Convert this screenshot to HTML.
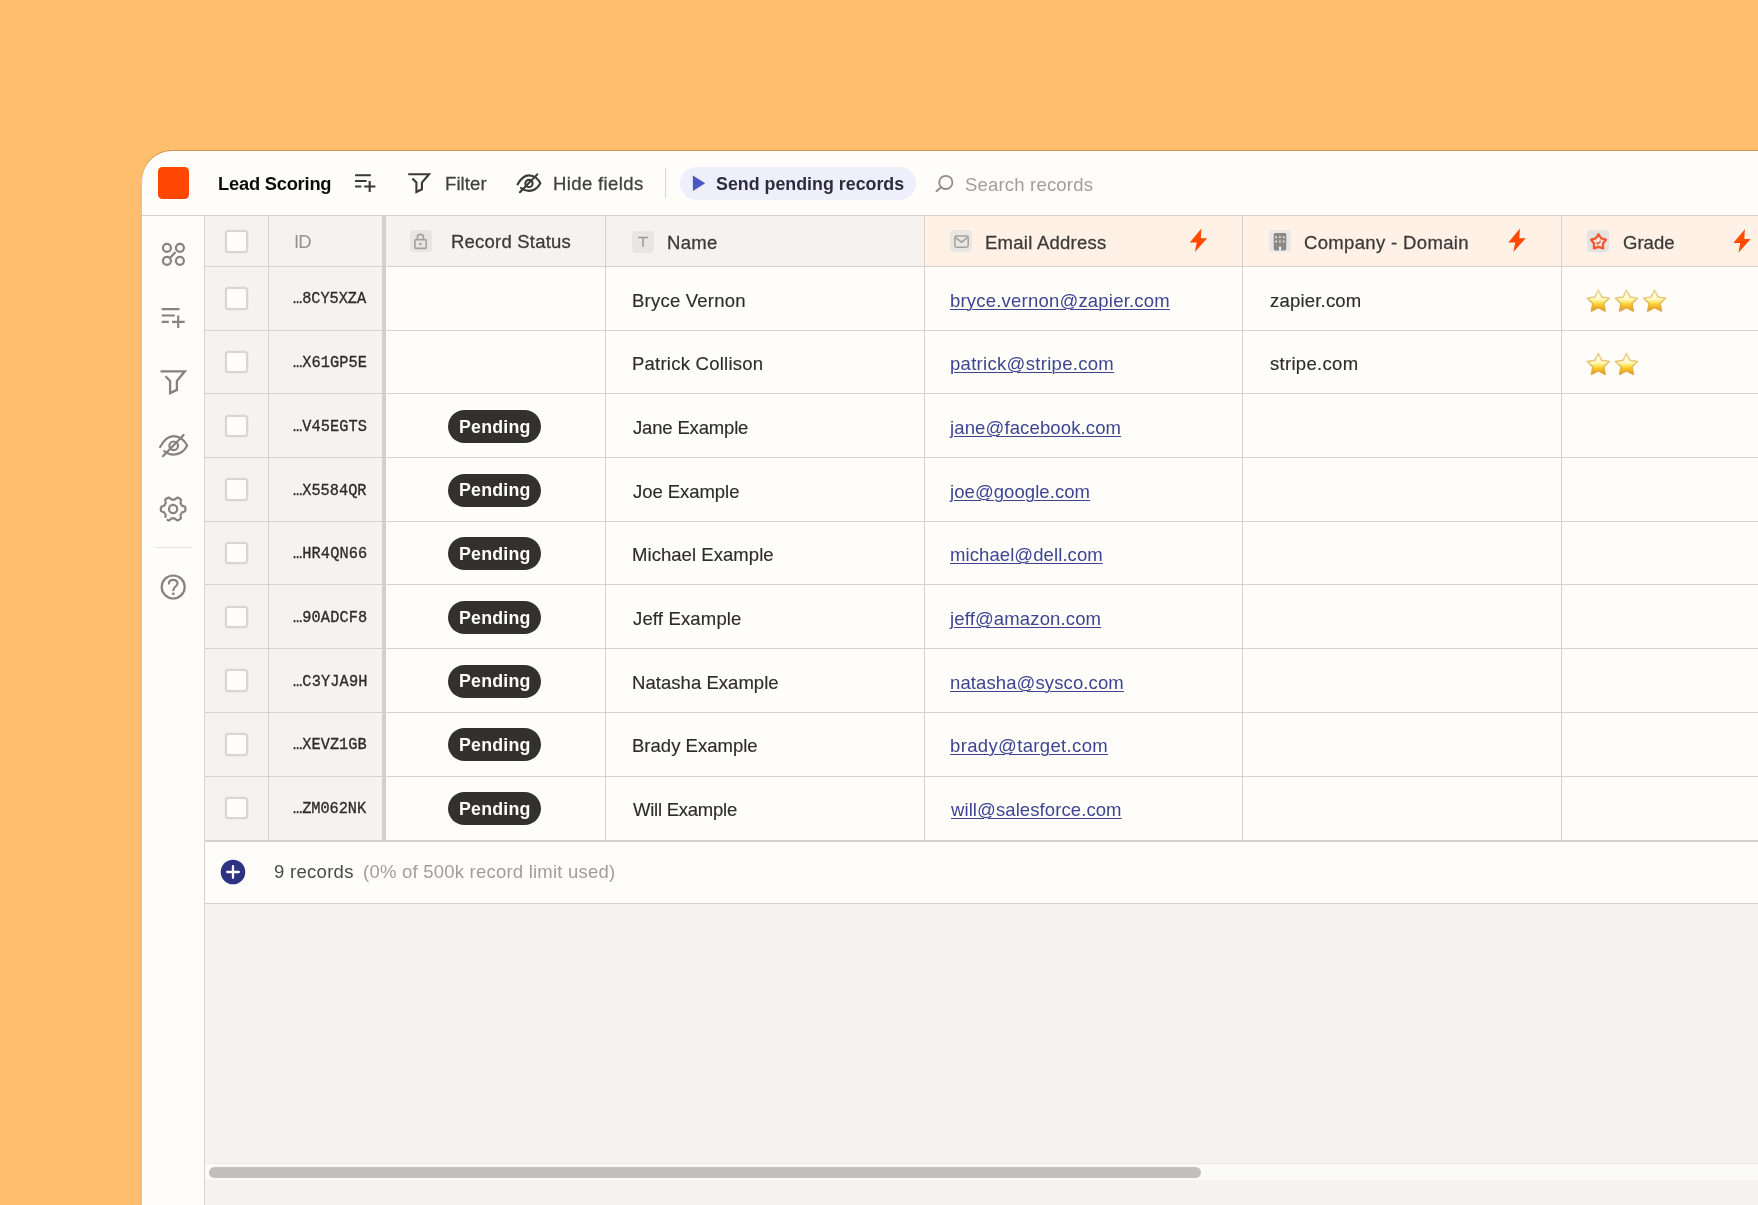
<!DOCTYPE html>
<html><head><meta charset="utf-8"><title>Lead Scoring</title>
<style>
html,body{margin:0;padding:0;width:1758px;height:1205px;overflow:hidden}
#root{width:1758px;height:1205px;overflow:hidden;background:#FFBD6E;position:relative;font-family:"Liberation Sans",sans-serif}
.t{position:absolute;white-space:nowrap;will-change:transform}
.r{position:absolute}
svg{position:absolute;overflow:visible}
</style></head><body><div id="root">
<div class="r" style="left:142.00px;top:150.50px;width:1700.00px;height:1100.00px;background:#FFFDF9;border-top-left-radius:30px;box-shadow:0 -1px 0 rgba(140,95,50,.45)"></div>
<div class="r" style="left:142.00px;top:215.00px;width:1620.00px;height:1.00px;background:#D5D2CF;"></div>
<div class="r" style="left:204.00px;top:216.00px;width:1.00px;height:1000.00px;background:#D5D2CF;"></div>
<div class="r" style="left:205.00px;top:904.00px;width:1560.00px;height:310.00px;background:#F5F2EF;"></div>
<div class="r" style="left:205.00px;top:216.00px;width:400.50px;height:50.50px;background:#F5F2EF;"></div>
<div class="r" style="left:605.50px;top:216.00px;width:318.50px;height:50.50px;background:#F5F2EF;"></div>
<div class="r" style="left:924.00px;top:216.00px;width:900.00px;height:50.50px;background:#FFF1E6;"></div>
<div class="r" style="left:205.00px;top:266.50px;width:180.00px;height:573.76px;background:#F5F2EF;"></div>
<div class="r" style="left:205.00px;top:265.96px;width:1560.00px;height:1.00px;background:#D5D2CF;"></div>
<div class="r" style="left:205.00px;top:329.66px;width:1560.00px;height:1.00px;background:#D5D2CF;"></div>
<div class="r" style="left:205.00px;top:393.36px;width:1560.00px;height:1.00px;background:#D5D2CF;"></div>
<div class="r" style="left:205.00px;top:457.06px;width:1560.00px;height:1.00px;background:#D5D2CF;"></div>
<div class="r" style="left:205.00px;top:520.76px;width:1560.00px;height:1.00px;background:#D5D2CF;"></div>
<div class="r" style="left:205.00px;top:584.46px;width:1560.00px;height:1.00px;background:#D5D2CF;"></div>
<div class="r" style="left:205.00px;top:648.16px;width:1560.00px;height:1.00px;background:#D5D2CF;"></div>
<div class="r" style="left:205.00px;top:711.86px;width:1560.00px;height:1.00px;background:#D5D2CF;"></div>
<div class="r" style="left:205.00px;top:775.56px;width:1560.00px;height:1.00px;background:#D5D2CF;"></div>
<div class="r" style="left:205.00px;top:840.20px;width:1560.00px;height:1.50px;background:#D5D2CF;"></div>
<div class="r" style="left:205.00px;top:903.00px;width:1560.00px;height:1.00px;background:#D5D2CF;"></div>
<div class="r" style="left:267.50px;top:216.00px;width:1.00px;height:625.00px;background:#D5D2CF;"></div>
<div class="r" style="left:605.00px;top:216.00px;width:1.00px;height:625.00px;background:#D5D2CF;"></div>
<div class="r" style="left:923.50px;top:216.00px;width:1.00px;height:625.00px;background:#D5D2CF;"></div>
<div class="r" style="left:1242.00px;top:216.00px;width:1.00px;height:625.00px;background:#D5D2CF;"></div>
<div class="r" style="left:1560.50px;top:216.00px;width:1.00px;height:625.00px;background:#D5D2CF;"></div>
<div class="r" style="left:382.00px;top:216.00px;width:3.70px;height:625.00px;background:#D2CFCC;"></div>
<div class="r" style="left:225.20px;top:230.30px;width:18.40px;height:18.40px;background:#FFFDF9;border:2px solid #D8D5D2;border-radius:3.5px;box-shadow:0 0 1.5px rgba(0,0,0,.12)"></div>
<div class="r" style="left:225.20px;top:287.26px;width:18.40px;height:18.40px;background:#FFFDF9;border:2px solid #D8D5D2;border-radius:3.5px;box-shadow:0 0 1.5px rgba(0,0,0,.12)"></div>
<div class="r" style="left:225.20px;top:350.96px;width:18.40px;height:18.40px;background:#FFFDF9;border:2px solid #D8D5D2;border-radius:3.5px;box-shadow:0 0 1.5px rgba(0,0,0,.12)"></div>
<div class="r" style="left:225.20px;top:414.66px;width:18.40px;height:18.40px;background:#FFFDF9;border:2px solid #D8D5D2;border-radius:3.5px;box-shadow:0 0 1.5px rgba(0,0,0,.12)"></div>
<div class="r" style="left:225.20px;top:478.36px;width:18.40px;height:18.40px;background:#FFFDF9;border:2px solid #D8D5D2;border-radius:3.5px;box-shadow:0 0 1.5px rgba(0,0,0,.12)"></div>
<div class="r" style="left:225.20px;top:542.06px;width:18.40px;height:18.40px;background:#FFFDF9;border:2px solid #D8D5D2;border-radius:3.5px;box-shadow:0 0 1.5px rgba(0,0,0,.12)"></div>
<div class="r" style="left:225.20px;top:605.76px;width:18.40px;height:18.40px;background:#FFFDF9;border:2px solid #D8D5D2;border-radius:3.5px;box-shadow:0 0 1.5px rgba(0,0,0,.12)"></div>
<div class="r" style="left:225.20px;top:669.46px;width:18.40px;height:18.40px;background:#FFFDF9;border:2px solid #D8D5D2;border-radius:3.5px;box-shadow:0 0 1.5px rgba(0,0,0,.12)"></div>
<div class="r" style="left:225.20px;top:733.16px;width:18.40px;height:18.40px;background:#FFFDF9;border:2px solid #D8D5D2;border-radius:3.5px;box-shadow:0 0 1.5px rgba(0,0,0,.12)"></div>
<div class="r" style="left:225.20px;top:796.86px;width:18.40px;height:18.40px;background:#FFFDF9;border:2px solid #D8D5D2;border-radius:3.5px;box-shadow:0 0 1.5px rgba(0,0,0,.12)"></div>
<div class="t" style="left:293.69px;top:229.50px;font:400 18.5px/24px 'Liberation Sans',sans-serif;letter-spacing:-0.907px;color:#96938f;">ID</div>
<div class="t" style="left:450.88px;top:229.50px;font:400 18.5px/24px 'Liberation Sans',sans-serif;letter-spacing:0.213px;color:#3b3a38;-webkit-text-stroke:0.28px #3b3a38">Record Status</div>
<div class="t" style="left:667.08px;top:230.50px;font:400 18.5px/24px 'Liberation Sans',sans-serif;letter-spacing:0.297px;color:#3b3a38;-webkit-text-stroke:0.28px #3b3a38">Name</div>
<div class="t" style="left:985.38px;top:230.50px;font:400 18.5px/24px 'Liberation Sans',sans-serif;letter-spacing:0.253px;color:#3b3a38;-webkit-text-stroke:0.28px #3b3a38">Email Address</div>
<div class="t" style="left:1303.66px;top:230.50px;font:400 18.5px/24px 'Liberation Sans',sans-serif;letter-spacing:0.345px;color:#3b3a38;-webkit-text-stroke:0.28px #3b3a38">Company - Domain</div>
<div class="t" style="left:1623.27px;top:230.50px;font:400 18.5px/24px 'Liberation Sans',sans-serif;letter-spacing:0.033px;color:#3b3a38;-webkit-text-stroke:0.28px #3b3a38">Grade</div>
<div class="t" style="left:293.13px;top:287.46px;font:400 15.3px/24px 'Liberation Mono',monospace;letter-spacing:-0.038px;color:#2d2c2b;transform:scaleY(1.13);transform-origin:0 17.2px;-webkit-text-stroke:0.3px #2d2c2b">…8CY5XZA</div>
<div class="t" style="left:631.88px;top:288.50px;font:400 18.5px/24px 'Liberation Sans',sans-serif;letter-spacing:0.223px;color:#2d2c2b;-webkit-text-stroke:0.15px #2d2c2b">Bryce Vernon</div>
<div class="t" style="left:950.21px;top:288.50px;font:400 18.5px/24px 'Liberation Sans',sans-serif;letter-spacing:0.206px;color:#3d4592;text-decoration:underline;text-decoration-thickness:1.2px;text-underline-offset:1.6px">bryce.vernon@zapier.com</div>
<div class="t" style="left:1269.65px;top:288.50px;font:400 18.5px/24px 'Liberation Sans',sans-serif;letter-spacing:0.201px;color:#2d2c2b;-webkit-text-stroke:0.15px #2d2c2b">zapier.com</div>
<div class="t" style="left:293.13px;top:351.16px;font:400 15.3px/24px 'Liberation Mono',monospace;letter-spacing:0.075px;color:#2d2c2b;transform:scaleY(1.13);transform-origin:0 17.2px;-webkit-text-stroke:0.3px #2d2c2b">…X61GP5E</div>
<div class="t" style="left:631.88px;top:351.50px;font:400 18.5px/24px 'Liberation Sans',sans-serif;letter-spacing:0.236px;color:#2d2c2b;-webkit-text-stroke:0.15px #2d2c2b">Patrick Collison</div>
<div class="t" style="left:950.21px;top:351.50px;font:400 18.5px/24px 'Liberation Sans',sans-serif;letter-spacing:0.301px;color:#3d4592;text-decoration:underline;text-decoration-thickness:1.2px;text-underline-offset:1.6px">patrick@stripe.com</div>
<div class="t" style="left:1269.89px;top:351.50px;font:400 18.5px/24px 'Liberation Sans',sans-serif;letter-spacing:0.301px;color:#2d2c2b;-webkit-text-stroke:0.15px #2d2c2b">stripe.com</div>
<div class="t" style="left:293.13px;top:414.86px;font:400 15.3px/24px 'Liberation Mono',monospace;letter-spacing:0.068px;color:#2d2c2b;transform:scaleY(1.13);transform-origin:0 17.2px;-webkit-text-stroke:0.3px #2d2c2b">…V45EGTS</div>
<div class="t" style="left:633.11px;top:415.50px;font:400 18.5px/24px 'Liberation Sans',sans-serif;letter-spacing:-0.166px;color:#2d2c2b;-webkit-text-stroke:0.15px #2d2c2b">Jane Example</div>
<div class="t" style="left:949.70px;top:415.50px;font:400 18.5px/24px 'Liberation Sans',sans-serif;letter-spacing:0.130px;color:#3d4592;text-decoration:underline;text-decoration-thickness:1.2px;text-underline-offset:1.6px">jane@facebook.com</div>
<div class="r" style="left:448.10px;top:409.96px;width:92.60px;height:32.90px;background:#33312f;border-radius:17px"></div>
<div class="t" style="left:459.41px;top:415.00px;font:700 17.8px/24px 'Liberation Sans',sans-serif;letter-spacing:0.195px;color:#fffdf9;">Pending</div>
<div class="t" style="left:293.13px;top:478.56px;font:400 15.3px/24px 'Liberation Mono',monospace;letter-spacing:0.016px;color:#2d2c2b;transform:scaleY(1.13);transform-origin:0 17.2px;-webkit-text-stroke:0.3px #2d2c2b">…X5584QR</div>
<div class="t" style="left:633.11px;top:479.50px;font:400 18.5px/24px 'Liberation Sans',sans-serif;letter-spacing:-0.053px;color:#2d2c2b;-webkit-text-stroke:0.15px #2d2c2b">Joe Example</div>
<div class="t" style="left:949.70px;top:479.50px;font:400 18.5px/24px 'Liberation Sans',sans-serif;letter-spacing:0.070px;color:#3d4592;text-decoration:underline;text-decoration-thickness:1.2px;text-underline-offset:1.6px">joe@google.com</div>
<div class="r" style="left:448.10px;top:473.66px;width:92.60px;height:32.90px;background:#33312f;border-radius:17px"></div>
<div class="t" style="left:459.41px;top:478.00px;font:700 17.8px/24px 'Liberation Sans',sans-serif;letter-spacing:0.195px;color:#fffdf9;">Pending</div>
<div class="t" style="left:293.13px;top:542.26px;font:400 15.3px/24px 'Liberation Mono',monospace;letter-spacing:0.103px;color:#2d2c2b;transform:scaleY(1.13);transform-origin:0 17.2px;-webkit-text-stroke:0.3px #2d2c2b">…HR4QN66</div>
<div class="t" style="left:631.88px;top:542.50px;font:400 18.5px/24px 'Liberation Sans',sans-serif;letter-spacing:0.055px;color:#2d2c2b;-webkit-text-stroke:0.15px #2d2c2b">Michael Example</div>
<div class="t" style="left:950.17px;top:542.50px;font:400 18.5px/24px 'Liberation Sans',sans-serif;letter-spacing:0.089px;color:#3d4592;text-decoration:underline;text-decoration-thickness:1.2px;text-underline-offset:1.6px">michael@dell.com</div>
<div class="r" style="left:448.10px;top:537.36px;width:92.60px;height:32.90px;background:#33312f;border-radius:17px"></div>
<div class="t" style="left:459.41px;top:542.00px;font:700 17.8px/24px 'Liberation Sans',sans-serif;letter-spacing:0.195px;color:#fffdf9;">Pending</div>
<div class="t" style="left:293.13px;top:605.96px;font:400 15.3px/24px 'Liberation Mono',monospace;letter-spacing:0.105px;color:#2d2c2b;transform:scaleY(1.13);transform-origin:0 17.2px;-webkit-text-stroke:0.3px #2d2c2b">…90ADCF8</div>
<div class="t" style="left:633.11px;top:606.50px;font:400 18.5px/24px 'Liberation Sans',sans-serif;letter-spacing:0.164px;color:#2d2c2b;-webkit-text-stroke:0.15px #2d2c2b">Jeff Example</div>
<div class="t" style="left:949.70px;top:606.50px;font:400 18.5px/24px 'Liberation Sans',sans-serif;letter-spacing:0.142px;color:#3d4592;text-decoration:underline;text-decoration-thickness:1.2px;text-underline-offset:1.6px">jeff@amazon.com</div>
<div class="r" style="left:448.10px;top:601.06px;width:92.60px;height:32.90px;background:#33312f;border-radius:17px"></div>
<div class="t" style="left:459.41px;top:606.00px;font:700 17.8px/24px 'Liberation Sans',sans-serif;letter-spacing:0.195px;color:#fffdf9;">Pending</div>
<div class="t" style="left:293.13px;top:669.66px;font:400 15.3px/24px 'Liberation Mono',monospace;letter-spacing:0.135px;color:#2d2c2b;transform:scaleY(1.13);transform-origin:0 17.2px;-webkit-text-stroke:0.3px #2d2c2b">…C3YJA9H</div>
<div class="t" style="left:631.88px;top:670.50px;font:400 18.5px/24px 'Liberation Sans',sans-serif;letter-spacing:0.044px;color:#2d2c2b;-webkit-text-stroke:0.15px #2d2c2b">Natasha Example</div>
<div class="t" style="left:950.17px;top:670.50px;font:400 18.5px/24px 'Liberation Sans',sans-serif;letter-spacing:0.110px;color:#3d4592;text-decoration:underline;text-decoration-thickness:1.2px;text-underline-offset:1.6px">natasha@sysco.com</div>
<div class="r" style="left:448.10px;top:664.76px;width:92.60px;height:32.90px;background:#33312f;border-radius:17px"></div>
<div class="t" style="left:459.41px;top:669.00px;font:700 17.8px/24px 'Liberation Sans',sans-serif;letter-spacing:0.195px;color:#fffdf9;">Pending</div>
<div class="t" style="left:293.13px;top:733.36px;font:400 15.3px/24px 'Liberation Mono',monospace;letter-spacing:0.043px;color:#2d2c2b;transform:scaleY(1.13);transform-origin:0 17.2px;-webkit-text-stroke:0.3px #2d2c2b">…XEVZ1GB</div>
<div class="t" style="left:631.88px;top:733.50px;font:400 18.5px/24px 'Liberation Sans',sans-serif;letter-spacing:0.016px;color:#2d2c2b;-webkit-text-stroke:0.15px #2d2c2b">Brady Example</div>
<div class="t" style="left:950.21px;top:733.50px;font:400 18.5px/24px 'Liberation Sans',sans-serif;letter-spacing:0.350px;color:#3d4592;text-decoration:underline;text-decoration-thickness:1.2px;text-underline-offset:1.6px">brady@target.com</div>
<div class="r" style="left:448.10px;top:728.46px;width:92.60px;height:32.90px;background:#33312f;border-radius:17px"></div>
<div class="t" style="left:459.41px;top:733.00px;font:700 17.8px/24px 'Liberation Sans',sans-serif;letter-spacing:0.195px;color:#fffdf9;">Pending</div>
<div class="t" style="left:293.13px;top:797.06px;font:400 15.3px/24px 'Liberation Mono',monospace;letter-spacing:-0.037px;color:#2d2c2b;transform:scaleY(1.13);transform-origin:0 17.2px;-webkit-text-stroke:0.3px #2d2c2b">…ZM062NK</div>
<div class="t" style="left:633.32px;top:797.50px;font:400 18.5px/24px 'Liberation Sans',sans-serif;letter-spacing:-0.246px;color:#2d2c2b;-webkit-text-stroke:0.15px #2d2c2b">Will Example</div>
<div class="t" style="left:951.40px;top:797.50px;font:400 18.5px/24px 'Liberation Sans',sans-serif;letter-spacing:0.091px;color:#3d4592;text-decoration:underline;text-decoration-thickness:1.2px;text-underline-offset:1.6px">will@salesforce.com</div>
<div class="r" style="left:448.10px;top:792.16px;width:92.60px;height:32.90px;background:#33312f;border-radius:17px"></div>
<div class="t" style="left:459.41px;top:797.00px;font:700 17.8px/24px 'Liberation Sans',sans-serif;letter-spacing:0.195px;color:#fffdf9;">Pending</div>
<div class="t" style="left:274.03px;top:859.50px;font:400 18.5px/24px 'Liberation Sans',sans-serif;letter-spacing:0.290px;color:#4a4947;">9 records</div>
<div class="t" style="left:362.75px;top:859.50px;font:400 18.5px/24px 'Liberation Sans',sans-serif;letter-spacing:0.222px;color:#a19e9a;">(0% of 500k record limit used)</div>
<svg style="left:219.8px;top:858.6px" width="26" height="26" viewBox="0 0 26 26"><circle cx="13" cy="13" r="12.3" fill="#2d3384"/><path d="M13 7.2v11.6M7.2 13h11.6" stroke="#fff" stroke-width="2.3" stroke-linecap="round"/></svg>
<div class="r" style="left:205.00px;top:1162.60px;width:1560.00px;height:16.20px;background:#FAFAF9;border-top:1px solid #ECEAE8"></div>
<div class="r" style="left:209.00px;top:1167.30px;width:992.00px;height:10.70px;background:#C1C0BF;border-radius:6px"></div>
<div class="r" style="left:157.60px;top:167.20px;width:31.50px;height:31.80px;background:#FE4703;border-radius:4.5px"></div>
<div class="t" style="left:218.18px;top:171.50px;font:700 18.3px/24px 'Liberation Sans',sans-serif;letter-spacing:-0.207px;color:#0c0b0a;">Lead Scoring</div>
<div class="t" style="left:444.88px;top:171.50px;font:400 18.5px/24px 'Liberation Sans',sans-serif;letter-spacing:0.103px;color:#403f3d;-webkit-text-stroke:0.28px #403f3d">Filter</div>
<div class="t" style="left:553.38px;top:171.50px;font:400 18.5px/24px 'Liberation Sans',sans-serif;letter-spacing:0.381px;color:#403f3d;-webkit-text-stroke:0.28px #403f3d">Hide fields</div>
<div class="r" style="left:665.00px;top:168.00px;width:1.00px;height:30.00px;background:#D9D6D3;"></div>
<div class="r" style="left:679.50px;top:167.00px;width:236.00px;height:32.80px;background:#EEEFFA;border-radius:17px"></div>
<div class="t" style="left:715.89px;top:172.00px;font:700 17.8px/24px 'Liberation Sans',sans-serif;letter-spacing:0.022px;color:#2c2d3c;">Send pending records</div>
<div class="t" style="left:964.56px;top:172.50px;font:400 18.5px/24px 'Liberation Sans',sans-serif;letter-spacing:0.189px;color:#a29f9b;">Search records</div>
<div class="r" style="left:154.40px;top:546.80px;width:37.60px;height:1.40px;background:#E6E3E0;"></div>
<div class="r" style="left:409.60px;top:230.30px;width:22.00px;height:22.00px;background:#E8E6E3;border-radius:4px"></div>
<div class="r" style="left:632.10px;top:230.80px;width:22.00px;height:22.00px;background:#E8E6E3;border-radius:4px"></div>
<div class="r" style="left:950.30px;top:229.90px;width:22.00px;height:22.00px;background:#E9E7E4;border-radius:4px"></div>
<div class="r" style="left:1269.00px;top:230.20px;width:22.00px;height:22.00px;background:#EAE8E6;border-radius:4px"></div>
<div class="r" style="left:1587.00px;top:230.20px;width:22.00px;height:22.00px;background:#E5E3E1;border-radius:4px"></div>
<svg style="left:0;top:0" width="1758" height="1205" viewBox="0 0 1758 1205"><defs><linearGradient id="sg" x1="0" y1="0" x2="0" y2="1"><stop offset="0" stop-color="#FFFDEE"/><stop offset="0.42" stop-color="#FFF9CC"/><stop offset="0.56" stop-color="#FFE966"/><stop offset="0.72" stop-color="#FBC52C"/><stop offset="0.9" stop-color="#F0A212"/><stop offset="1" stop-color="#EB9A10"/></linearGradient><linearGradient id="sgs" x1="0" y1="0" x2="0" y2="1"><stop offset="0" stop-color="#EBD59C"/><stop offset="0.5" stop-color="#E6BE62"/><stop offset="1" stop-color="#DDA23A"/></linearGradient></defs><path d="M355.08,175.27H370.84M355.08,180.93H366.59M355.08,186.51H361.37M364.20,186.51H375.44M369.69,180.93V192.08" stroke="#3a3937" fill="none" stroke-width="2.1" /><path d="M412.45,178.48 L416.41,182.52 L416.41,191.98 L421.91,189.23 L421.91,182.52 L429.05,174.27 L408.24,174.27" stroke="#3a3937" fill="none" stroke-width="2.1" stroke-linejoin="miter"/><path d="M517.54,184.44 C520.82,178.48 525.02,175.37 528.97,175.37 C534.26,175.37 538.46,179.32 540.31,183.27 C538.29,187.30 534.26,190.83 528.80,190.83 C525.86,190.83 523.34,189.82 520.99,187.97" stroke="#3a3937" fill="none" stroke-width="2.1" stroke-linecap="round"/><circle cx="528.97" cy="183.44" r="3.61" stroke="#3a3937" fill="none" stroke-width="2.1"/><path d="M519.90,192.17 L537.28,174.36" stroke="#3a3937" fill="none" stroke-width="2.1" stroke-linecap="round"/><polygon points="692.9,175.5 705.2,183.3 692.9,191.1" fill="#4c56c4"/><circle cx="945.80" cy="182.40" r="6.60" stroke="#8f8c88" fill="none" stroke-width="1.8"/><path d="M941.2,187.3 L936.4,191.2" stroke="#8f8c88" fill="none" stroke-width="1.8" stroke-linecap="round"/><circle cx="166.90" cy="247.80" r="4.00" stroke="#85827f" fill="none" stroke-width="2.2"/><circle cx="179.90" cy="247.80" r="4.00" stroke="#85827f" fill="none" stroke-width="2.2"/><circle cx="166.90" cy="260.80" r="4.00" stroke="#85827f" fill="none" stroke-width="2.2"/><circle cx="179.90" cy="260.80" r="4.00" stroke="#85827f" fill="none" stroke-width="2.2"/><path d="M169.9,257.9 L174.9,252.7" stroke="#85827f" fill="none" stroke-width="2.2" stroke-linecap="round"/><path d="M161.70,309.10H179.50M161.70,315.50H174.70M161.70,321.80H168.80M172.00,321.80H184.70M178.20,315.50V328.10" stroke="#85827f" fill="none" stroke-width="2.2" /><path d="M165.50,376.20 L170.10,380.90 L170.10,393.10 L176.90,389.90 L176.90,380.90 L184.80,371.30 L160.60,371.30" stroke="#85827f" fill="none" stroke-width="2.3" stroke-linejoin="miter"/><path d="M160.10,447.00 C164.00,439.90 169.00,436.20 173.70,436.20 C180.00,436.20 185.00,440.90 187.20,445.60 C184.80,450.40 180.00,454.60 173.50,454.60 C170.00,454.60 167.00,453.40 164.20,451.20" stroke="#85827f" fill="none" stroke-width="2.2" stroke-linecap="round"/><circle cx="173.70" cy="445.80" r="4.30" stroke="#85827f" fill="none" stroke-width="2.2"/><path d="M162.90,456.20 L183.60,435.00" stroke="#85827f" fill="none" stroke-width="2.2" stroke-linecap="round"/><path d="M165.39,516.98 L165.47,516.40 L165.56,515.83 L165.66,515.30 L165.73,514.84 L165.54,514.59 L165.36,514.33 L165.19,514.07 L165.02,513.81 L164.87,513.54 L164.72,513.26 L164.58,512.98 L164.46,512.69 L164.30,512.42 L163.82,512.25 L163.30,512.07 L162.76,511.87 L162.23,511.63 L161.71,511.36 L161.22,511.05 L160.92,510.69 L160.87,510.28 L160.83,509.87 L160.81,509.47 L160.80,509.06 L160.81,508.65 L160.82,508.24 L160.86,507.83 L160.90,507.43 L161.10,507.04 L161.57,506.72 L162.08,506.44 L162.61,506.19 L163.15,505.98 L163.68,505.79 L164.17,505.63 L164.42,505.39 L164.55,505.10 L164.68,504.82 L164.82,504.54 L164.98,504.27 L165.14,504.00 L165.31,503.74 L165.49,503.48 L165.68,503.23 L165.69,502.84 L165.59,502.32 L165.49,501.76 L165.41,501.18 L165.37,500.60 L165.37,500.02 L165.42,499.46 L165.71,499.17 L166.04,498.93 L166.38,498.70 L166.73,498.48 L167.08,498.27 L167.44,498.08 L167.81,497.90 L168.18,497.73 L168.56,497.57 L169.06,497.74 L169.56,498.02 L170.06,498.35 L170.52,498.70 L170.96,499.06 L171.37,499.42 L171.74,499.70 L172.05,499.66 L172.36,499.63 L172.67,499.61 L172.98,499.60 L173.30,499.60 L173.61,499.61 L173.92,499.64 L174.23,499.67 L174.55,499.66 L174.93,499.33 L175.35,498.97 L175.80,498.61 L176.27,498.26 L176.77,497.94 L177.28,497.68 L177.74,497.61 L178.12,497.77 L178.49,497.94 L178.85,498.13 L179.21,498.32 L179.56,498.53 L179.91,498.75 L180.24,498.99 L180.57,499.23 L180.80,499.60 L180.84,500.16 L180.83,500.75 L180.77,501.34 L180.69,501.91 L180.59,502.46 L180.48,502.97 L180.57,503.30 L180.76,503.55 L180.94,503.81 L181.10,504.07 L181.26,504.34 L181.41,504.61 L181.55,504.89 L181.69,505.18 L181.81,505.46 L182.15,505.67 L182.66,505.84 L183.19,506.03 L183.73,506.26 L184.26,506.51 L184.76,506.80 L185.22,507.13 L185.31,507.53 L185.35,507.94 L185.38,508.35 L185.40,508.75 L185.40,509.16 L185.39,509.57 L185.36,509.98 L185.32,510.39 L185.27,510.79 L184.86,511.13 L184.36,511.43 L183.83,511.70 L183.30,511.92 L182.76,512.12 L182.25,512.30 L181.83,512.48 L181.71,512.77 L181.58,513.05 L181.44,513.33 L181.29,513.61 L181.14,513.88 L180.97,514.14 L180.79,514.40 L180.61,514.65 L180.47,514.94 L180.56,515.44 L180.67,515.98 L180.76,516.55 L180.82,517.13 L180.84,517.72 L180.81,518.29 L180.64,518.72 L180.31,518.97 L179.97,519.20 L179.63,519.42 L179.28,519.63 L178.92,519.83 L178.56,520.02 L178.19,520.20 L177.82,520.36 L177.38,520.36 L176.87,520.11 L176.37,519.81 L175.89,519.47 L175.44,519.11 L175.01,518.74 L174.62,518.40 L174.29,518.32 L173.98,518.36 L173.67,518.38 L173.36,518.40 L173.05,518.40 L172.73,518.39 L172.42,518.38 L172.11,518.35 L171.80,518.31 L171.45,518.52 L171.05,518.87 L170.61,519.23 L170.15,519.58 L169.66,519.92 L169.16,520.20 L168.65,520.43 L168.26,520.31 L167.88,520.14 L167.52,519.96" stroke="#85827f" fill="none" stroke-width="2.2" stroke-linejoin="round" stroke-linecap="round"/><circle cx="173.10" cy="509.00" r="4.10" stroke="#85827f" fill="none" stroke-width="2.2"/><circle cx="173.20" cy="587.00" r="11.50" stroke="#85827f" fill="none" stroke-width="2.2"/><path d="M168.9,583.6 C168.9,581.2 170.8,579.9 173.2,579.9 C175.8,579.9 177.5,581.4 177.5,583.5 C177.5,586.4 173.3,586.6 173.3,590.2" stroke="#85827f" fill="none" stroke-width="2.1" stroke-linecap="round"/><circle cx="173.30" cy="593.80" r="1.40" stroke="none" fill="#85827f" stroke-width="0"/><rect x="414.9" y="239.6" width="11.2" height="8.8" rx="1" stroke="#a3a09c" fill="none" stroke-width="1.6"/><path d="M417.4,239.4 V237.3 C417.4,233.4 423.4,233.4 423.4,237.3 V239.4" stroke="#a3a09c" fill="none" stroke-width="1.6" /><circle cx="420.40" cy="244.00" r="1.30" stroke="none" fill="#a3a09c" stroke-width="0"/><path d="M638,237.5 H648.1 M643.05,237.5 V246.8" stroke="#9a9794" fill="none" stroke-width="1.5" /><rect x="954.8" y="235.9" width="13.4" height="11.3" rx="1.6" stroke="#a3a09c" fill="none" stroke-width="1.5"/><path d="M955.4,237.4 L961.5,242.2 L967.6,237.4" stroke="#a3a09c" fill="none" stroke-width="1.5" /><rect x="1273.7" y="232.9" width="12.6" height="17.6" rx="1.7" fill="#8b8987"/><rect x="1275.20" y="236.30" width="1.8" height="1.8" fill="#e2e0dd"/><rect x="1279.00" y="236.30" width="1.8" height="1.8" fill="#e2e0dd"/><rect x="1282.80" y="236.30" width="1.8" height="1.8" fill="#e2e0dd"/><rect x="1275.20" y="240.60" width="1.8" height="1.8" fill="#e2e0dd"/><rect x="1279.00" y="240.60" width="1.8" height="1.8" fill="#e2e0dd"/><rect x="1282.80" y="240.60" width="1.8" height="1.8" fill="#e2e0dd"/><rect x="1279.0" y="246.6" width="2.1" height="4.2" fill="#eceae8"/><polygon points="1598.50,234.30 1601.26,238.30 1605.92,239.69 1602.97,243.55 1603.08,248.41 1598.50,246.80 1593.92,248.41 1594.03,243.55 1591.08,239.69 1595.74,238.30" fill="#F8E2D9" stroke="#EF5A30" stroke-width="2.3" stroke-linejoin="round"/><path d="M1596.4,242.5 l1.6,1.5 l2.6,-3.2" stroke="#D9583A" fill="none" stroke-width="1.2" /><polygon points="1201.40,228.60 1189.80,242.40 1196.70,242.40 1194.90,252.10 1207.20,238.30 1200.80,238.30" fill="#FF4A00"/><polygon points="1519.90,228.60 1508.30,242.40 1515.20,242.40 1513.40,252.10 1525.70,238.30 1519.30,238.30" fill="#FF4A00"/><polygon points="1744.90,229.20 1733.30,243.00 1740.20,243.00 1738.40,252.70 1750.70,238.90 1744.30,238.90" fill="#FF4A00"/><polygon points="1598.30,290.10 1601.71,297.01 1609.33,298.12 1603.82,303.49 1605.12,311.08 1598.30,307.50 1591.48,311.08 1592.78,303.49 1587.27,298.12 1594.89,297.01" fill="url(#sg)" stroke="url(#sgs)" stroke-width="1.5" stroke-linejoin="round"/><polygon points="1626.50,290.10 1629.91,297.01 1637.53,298.12 1632.02,303.49 1633.32,311.08 1626.50,307.50 1619.68,311.08 1620.98,303.49 1615.47,298.12 1623.09,297.01" fill="url(#sg)" stroke="url(#sgs)" stroke-width="1.5" stroke-linejoin="round"/><polygon points="1654.60,290.10 1658.01,297.01 1665.63,298.12 1660.12,303.49 1661.42,311.08 1654.60,307.50 1647.78,311.08 1649.08,303.49 1643.57,298.12 1651.19,297.01" fill="url(#sg)" stroke="url(#sgs)" stroke-width="1.5" stroke-linejoin="round"/><polygon points="1598.30,353.40 1601.71,360.31 1609.33,361.42 1603.82,366.79 1605.12,374.38 1598.30,370.80 1591.48,374.38 1592.78,366.79 1587.27,361.42 1594.89,360.31" fill="url(#sg)" stroke="url(#sgs)" stroke-width="1.5" stroke-linejoin="round"/><polygon points="1626.50,353.40 1629.91,360.31 1637.53,361.42 1632.02,366.79 1633.32,374.38 1626.50,370.80 1619.68,374.38 1620.98,366.79 1615.47,361.42 1623.09,360.31" fill="url(#sg)" stroke="url(#sgs)" stroke-width="1.5" stroke-linejoin="round"/></svg>
</div></body></html>
